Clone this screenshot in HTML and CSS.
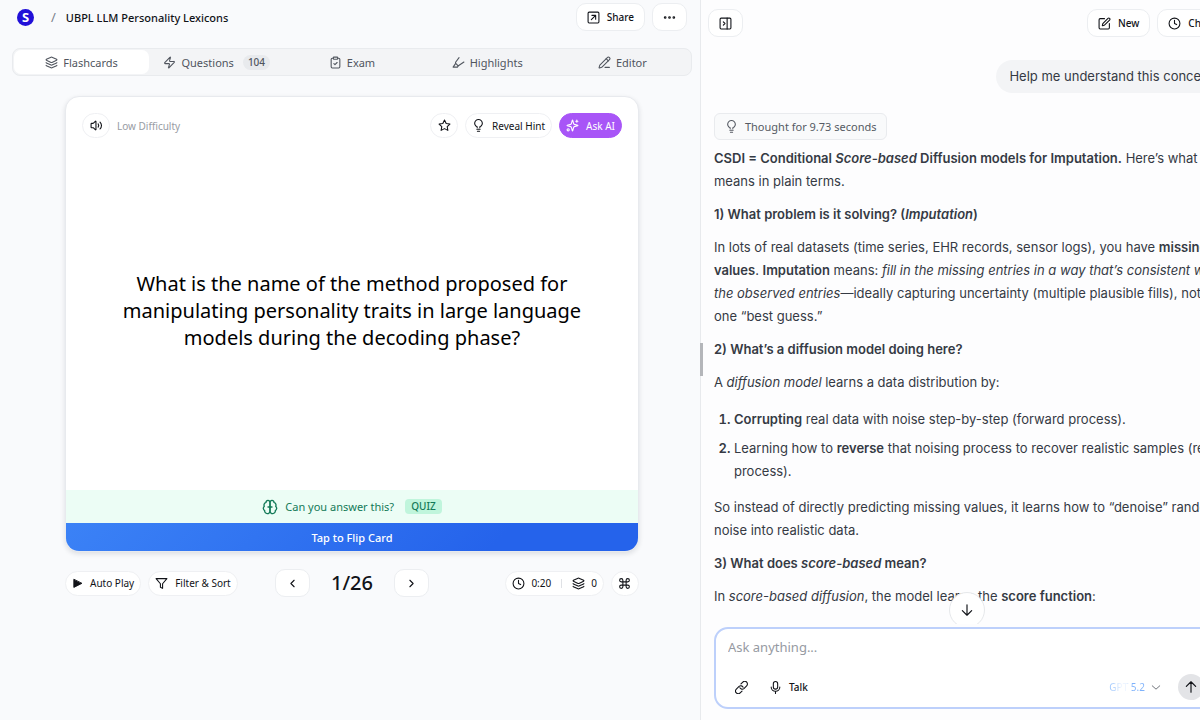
FILE: index.html
```html
<!DOCTYPE html>
<html lang="en">
  <head>
    <meta charset="UTF-8" />
    <meta name="viewport" content="width=device-width, initial-scale=1.0" />
    <title>UBPL LLM Personality Lexicons</title>
    <link rel="stylesheet" href="styles.css">
  </head>
  <body>
    <svg class="sprite" aria-hidden="true">
      <symbol id="layers" viewBox="0 0 24 24">
        <path d="M12.83 2.18a2 2 0 0 0-1.66 0L2.6 6.08a1 1 0 0 0 0 1.83l8.58 3.91a2 2 0 0 0 1.66 0l8.58-3.9a1 1 0 0 0 0-1.83z" />
        <path d="M2 12a1 1 0 0 0 .58.91l8.6 3.91a2 2 0 0 0 1.65 0l8.58-3.9A1 1 0 0 0 22 12" />
        <path d="M2 17a1 1 0 0 0 .58.91l8.6 3.91a2 2 0 0 0 1.65 0l8.58-3.9A1 1 0 0 0 22 17" />
      </symbol>
      <symbol id="zap" viewBox="0 0 24 24">
        <path d="M4 14a1 1 0 0 1-.78-1.63l9.9-10.2a.5.5 0 0 1 .86.46l-1.92 6.02A1 1 0 0 0 13 10h7a1 1 0 0 1 .78 1.63l-9.9 10.2a.5.5 0 0 1-.86-.46l1.92-6.02A1 1 0 0 0 11 14z" />
      </symbol>
      <symbol id="clipboard" viewBox="0 0 24 24">
        <rect x="8" y="2" width="8" height="4" rx="1" />
        <path d="M16 4h2a2 2 0 0 1 2 2v14a2 2 0 0 1-2 2H6a2 2 0 0 1-2-2V6a2 2 0 0 1 2-2h2M9 14l2 2 4-4" />
      </symbol>
      <symbol id="highlighter" viewBox="0 0 24 24">
        <path d="M13 3 7 11a2 2 0 0 0 0 2.500l3 3.500a2 2 0 0 0 2.500.5L22 11" />
        <path d="M6.500 14 2 20.500h8l2-3" />
      </symbol>
      <symbol id="pen-line" viewBox="0 0 24 24">
        <path d="M13 21h8M15 5l4 4" />
        <path d="M21.174 6.812a1 1 0 0 0-3.986-3.987L3.842 16.174a2 2 0 0 0-.5.83l-1.321 4.352a.5.5 0 0 0 .623.622l4.353-1.32a2 2 0 0 0 .83-.497z" />
      </symbol>
      <symbol id="volume" viewBox="0 0 24 24">
        <path d="M11 4.702a.705.705 0 0 0-1.203-.498L6.413 7.587A1.400 1.400 0 0 1 5.416 8H3a1 1 0 0 0-1 1v6a1 1 0 0 0 1 1h2.416a1.400 1.400 0 0 1 .997.413l3.383 3.384A.705.705 0 0 0 11 19.298z" />
        <path d="M15 9a5 5 0 0 1 0 6M18.500 5.600a9 9 0 0 1 0 12.800" />
      </symbol>
      <symbol id="star" viewBox="0 0 24 24">
        <path d="m12 2 3.090 6.260L22 9.270l-5 4.870 1.180 6.880L12 17.770l-6.180 3.250L7 14.140 2 9.270l6.910-1.010z" />
      </symbol>
      <symbol id="bulb" viewBox="0 0 24 24">
        <path d="M9.500 16v-1.500A7 7 0 1 1 14.500 14.500V16M9 19h6M10 22.500h4" />
      </symbol>
      <symbol id="sparkles" viewBox="0 0 24 24">
        <path d="M9.937 15.500A2 2 0 0 0 8.500 14.063l-6.135-1.582a.5.5 0 0 1 0-.962L8.500 9.936A2 2 0 0 0 9.937 8.500l1.582-6.135a.5.5 0 0 1 .963 0L14.063 8.500A2 2 0 0 0 15.500 9.937l6.135 1.581a.5.5 0 0 1 0 .964L15.500 14.063a2 2 0 0 0-1.437 1.437l-1.582 6.135a.5.5 0 0 1-.963 0z" />
        <path d="M20 2v4M22 4h-4" />
        <circle cx="4" cy="20" r="2" />
      </symbol>
      <symbol id="brain" viewBox="0 0 24 24">
        <path d="M12 5a3 3 0 1 0-5.997.125 4 4 0 0 0-2.526 5.770 4 4 0 0 0 .556 6.588A4 4 0 1 0 12 18Z" />
        <path d="M12 5a3 3 0 1 1 5.997.125 4 4 0 0 1 2.526 5.770 4 4 0 0 1-.556 6.588A4 4 0 1 1 12 18Z" />
        <path d="M9 12h6" />
      </symbol>
      <symbol id="play" viewBox="0 0 24 24">
        <path d="M4 3.500v17L21 12z" fill="currentColor" />
      </symbol>
      <symbol id="filter" viewBox="0 0 24 24">
        <path d="M22 3H2l8 9.460V19l4 2v-8.540z" />
      </symbol>
      <symbol id="left" viewBox="0 0 24 24"><path d="m15 18-6-6 6-6" /></symbol>
      <symbol id="right" viewBox="0 0 24 24"><path d="m9 18 6-6-6-6" /></symbol>
      <symbol id="down" viewBox="0 0 24 24"><path d="m3 8 9 8 9-8" /></symbol>
      <symbol id="clock" viewBox="0 0 24 24">
        <circle cx="12" cy="12" r="10" />
        <path d="M12 6v6l4 2" />
      </symbol>
      <symbol id="command" viewBox="0 0 24 24">
        <path d="M15 6v12a3 3 0 1 0 3-3H6a3 3 0 1 0 3 3V6a3 3 0 1 0-3 3h12a3 3 0 1 0-3-3" />
      </symbol>
      <symbol id="share" viewBox="0 0 24 24">
        <rect x="2" y="2" width="20" height="20" rx="2" />
        <path d="M9 8h7v7M16 8l-8 8" />
      </symbol>
      <symbol id="dots" viewBox="0 0 24 24">
        <circle cx="4" cy="12" r="1" />
        <circle cx="12" cy="12" r="1" />
        <circle cx="20" cy="12" r="1" />
      </symbol>
      <symbol id="panel" viewBox="0 0 24 24">
        <rect x="2" y="2" width="20" height="20" rx="2" />
        <path d="M15 2v20M8 9l3 3-3 3" />
      </symbol>
      <symbol id="compose" viewBox="0 0 24 24">
        <path d="M12 3H4a2 2 0 0 0-2 2v15a2 2 0 0 0 2 2h15a2 2 0 0 0 2-2v-8" />
        <path d="M18.375 2.625a1 1 0 0 1 3 3l-9.013 9.014a2 2 0 0 1-.853.505l-2.873.840a.5.5 0 0 1-.620-.620l.840-2.873a2 2 0 0 1 .506-.852z" />
      </symbol>
      <symbol id="arrow-down" viewBox="0 0 24 24"><path d="M12 3v18M4 13l8 8 8-8" /></symbol>
      <symbol id="arrow-up" viewBox="0 0 24 24"><path d="M12 21V3M4 11l8-8 8 8" /></symbol>
      <symbol id="link" viewBox="0 0 24 24">
        <path d="M9 12.500a5 5 0 0 0 7.500 1.500l5-5a4.800 4.800 0 0 0-7-7L11 5.500" />
        <path d="M15 11.500a5 5 0 0 0-7.500-1.500l-5 5a4.800 4.800 0 0 0 7 7L13 18.500" />
      </symbol>
      <symbol id="mic" viewBox="0 0 24 24">
        <rect x="8" y="1" width="8" height="14" rx="4" />
        <path d="M4 11a8 8 0 0 0 16 0M12 19v4" />
      </symbol>
    </svg>

    <div class="app">
      <main class="study">
        <header class="topbar">
          <a class="logo" href="#" aria-label="Home">S</a>
          <span class="slash">/</span>
          <h1>UBPL LLM Personality Lexicons</h1>
          <div class="topbar-actions">
            <button class="btn"><svg class="icon"><use href="#share" /></svg>Share</button>
            <button class="btn" aria-label="More"><svg class="icon dots"><use href="#dots" /></svg></button>
          </div>
        </header>

        <nav class="tabs">
          <button class="tab active"><svg class="icon"><use href="#layers" /></svg>Flashcards</button>
          <button class="tab"><svg class="icon"><use href="#zap" /></svg>Questions<span class="count">104</span></button>
          <button class="tab"><svg class="icon"><use href="#clipboard" /></svg>Exam</button>
          <button class="tab"><svg class="icon"><use href="#highlighter" /></svg>Highlights</button>
          <button class="tab"><svg class="icon"><use href="#pen-line" /></svg>Editor</button>
        </nav>

        <div class="deck">
          <section class="card">
            <div class="card-head">
              <button class="pill round" aria-label="Read aloud"><svg class="icon"><use href="#volume" /></svg></button>
              <span class="difficulty">Low Difficulty</span>
              <button class="pill round" aria-label="Star"><svg class="icon"><use href="#star" /></svg></button>
              <button class="pill"><svg class="icon"><use href="#bulb" /></svg>Reveal Hint</button>
              <button class="pill ask"><svg class="icon"><use href="#sparkles" /></svg>Ask AI</button>
            </div>
            <p class="question">What is the name of the method proposed for manipulating personality traits in large language models during the decoding phase?</p>
            <div class="quiz">
              <svg class="icon"><use href="#brain" /></svg>
              <span>Can you answer this?</span>
              <span class="quiz-tag">QUIZ</span>
            </div>
            <button class="flip">Tap to Flip Card</button>
          </section>

          <div class="controls">
            <div class="group">
              <button class="pill"><svg class="icon play"><use href="#play" /></svg>Auto Play</button>
              <button class="pill"><svg class="icon"><use href="#filter" /></svg>Filter &amp; Sort</button>
            </div>
            <div class="pager">
              <button class="btn" aria-label="Previous"><svg class="icon"><use href="#left" /></svg></button>
              <span class="page">1/26</span>
              <button class="btn" aria-label="Next"><svg class="icon"><use href="#right" /></svg></button>
            </div>
            <div class="group end">
              <div class="pill stats">
                <svg class="icon"><use href="#clock" /></svg><span>0:20</span>
                <span class="divider"></span>
                <svg class="icon"><use href="#layers" /></svg><span>0</span>
              </div>
              <button class="pill round" aria-label="Shortcuts"><svg class="icon"><use href="#command" /></svg></button>
            </div>
          </div>
        </div>
      </main>

      <aside class="chat">
        <div class="handle"></div>
        <header class="chat-head">
          <button class="btn" aria-label="Close panel"><svg class="icon"><use href="#panel" /></svg></button>
          <div class="chat-actions">
            <button class="btn"><svg class="icon"><use href="#compose" /></svg>New</button>
            <button class="btn"><svg class="icon"><use href="#clock" /></svg>Chats</button>
          </div>
        </header>

        <div class="thread">
          <p class="bubble">Help me understand this concept</p>
          <button class="thought"><svg class="icon"><use href="#bulb" /></svg>Thought for 9.73 seconds</button>
          <div class="answer">
            <p><strong>CSDI = Conditional <em>Score-based</em> Diffusion models for Imputation.</strong> Here’s what that means in plain terms.</p>
            <h2>1) What problem is it solving? (<em>Imputation</em>)</h2>
            <p>In lots of real datasets (time series, EHR records, sensor logs), you have <strong>missing values</strong>. <strong>Imputation</strong> means: <em>fill in the missing entries in a way that’s consistent with the observed entries</em>—ideally capturing uncertainty (multiple plausible fills), not just one “best guess.”</p>
            <h2>2) What’s a diffusion model doing here?</h2>
            <p>A <em>diffusion model</em> learns a data distribution by:</p>
            <ol>
              <li><strong>Corrupting</strong> real data with noise step-by-step (forward process).</li>
              <li>Learning how to <strong>reverse</strong> that noising process to recover realistic samples (reverse process).</li>
            </ol>
            <p>So instead of directly predicting missing values, it learns how to “denoise” random noise into realistic data.</p>
            <h2>3) What does <em>score-based</em> mean?</h2>
            <p>In <em>score-based diffusion</em>, the model learns the <strong>score function</strong>:</p>
          </div>
          <button class="scroll-down" aria-label="Scroll to bottom"><svg class="icon"><use href="#arrow-down" /></svg></button>
        </div>

        <form class="composer">
          <textarea rows="1" placeholder="Ask anything..." aria-label="Message"></textarea>
          <div class="composer-row">
            <button type="button" class="tool" aria-label="Attach link"><svg class="icon"><use href="#link" /></svg></button>
            <button type="button" class="tool"><svg class="icon"><use href="#mic" /></svg>Talk</button>
            <div class="model">
              <select aria-label="Model">
                <option>GPT 5.2</option>
              </select>
              <svg class="icon"><use href="#down" /></svg>
            </div>
            <button type="button" class="send" aria-label="Send"><svg class="icon"><use href="#arrow-up" /></svg></button>
          </div>
        </form>
      </aside>
    </div>
  </body>
</html>
```
FILE: styles.css
```css
* {
  box-sizing: border-box;
}
body {
  margin: 0;
  overflow: hidden;
  background: #f9fafc;
  color: #111318;
  font-family: 'Noto Sans', sans-serif;
  font-size: 11px;
}
h1,
h2,
p,
ol {
  margin: 0;
}
button,
select,
textarea {
  font: inherit;
  color: inherit;
}
button {
  display: flex;
  align-items: center;
  justify-content: center;
  padding: 0;
  border: 0;
  background: none;
  cursor: pointer;
}
.sprite {
  display: none;
}
.icon {
  flex: none;
  width: 13px;
  height: 13px;
  fill: none;
  stroke: currentColor;
  stroke-width: 2;
  stroke-linecap: round;
  stroke-linejoin: round;
}
.app {
  display: flex;
  height: 100vh;
}

/* Shared buttons */
.btn {
  gap: 7px;
  min-width: 35px;
  height: 28px;
  padding: 0 10px;
  border: 1px solid #eceef1;
  border-radius: 10px;
  background: #fff;
  font-size: 10px;
  font-weight: 500;
}
.pill {
  display: flex;
  align-items: center;
  justify-content: center;
  gap: 7px;
  height: 25px;
  padding: 0 6px;
  border: 1px solid #eff0f3;
  border-radius: 13px;
  background: #fff;
  font-size: 10px;
}
.pill.round {
  width: 28px;
  padding: 0;
}

/* Study pane */
.study {
  flex: 0 0 58.33%;
  min-width: 0;
  padding: 3px 8px 0 12px;
}
.topbar {
  display: flex;
  align-items: center;
  padding: 0 5px;
}
.logo {
  display: grid;
  place-items: center;
  width: 17px;
  height: 17px;
  border-radius: 50%;
  background: #2110d8;
  color: #fff;
  font-size: 13px;
  font-weight: 700;
  line-height: 17px;
  text-decoration: none;
}
.slash {
  margin: 0 10px 0 17px;
  color: #7b808a;
  font-size: 13px;
}
h1 {
  font-size: 11px;
  font-weight: 500;
}
.topbar-actions {
  display: flex;
  gap: 7px;
  margin-left: auto;
}
.topbar .dots {
  stroke-width: 3;
}
.tabs {
  display: grid;
  grid-template-columns: repeat(5, 1fr);
  height: 28px;
  margin-top: 17px;
  padding: 1px;
  border: 1px solid #e9ebee;
  border-radius: 8px;
  background: #f3f4f6;
}
.tab {
  gap: 5px;
  border-radius: 7px;
  color: #50555e;
}
.tab.active {
  background: #fff;
}
.count {
  margin-left: 4px;
  padding: 0 5px;
  border-radius: 8px;
  background: #e8eaed;
  font-size: 10px;
  font-weight: 500;
  line-height: 15px;
}

/* Flashcard */
.deck {
  padding: 20px 53px 0;
}
.card {
  display: flex;
  flex-direction: column;
  height: calc(100vh - 264px);
  overflow: hidden;
  border: 1px solid #e8eaee;
  border-radius: 14px;
  background: #fff;
  box-shadow: 0 2px 5px rgba(20, 25, 40, 0.12);
}
.card-head {
  display: flex;
  align-items: center;
  gap: 7px;
  padding: 16px 16px 0;
}
.difficulty {
  margin-right: auto;
  color: #989ca4;
  font-size: 10px;
}
.pill.ask {
  border-color: #a855f7;
  background: #a855f7;
  color: #fff;
}
.question {
  flex: 1;
  display: flex;
  align-items: center;
  padding: 0 50px 8px;
  color: #000;
  font-size: 20px;
  line-height: 27px;
  text-align: center;
}
.quiz {
  display: flex;
  align-items: center;
  justify-content: center;
  gap: 7px;
  height: 33px;
  background: #ecfdf5;
  color: #137a58;
}
.quiz .icon {
  width: 16px;
  height: 16px;
}
.quiz-tag {
  margin-left: 4px;
  padding: 0 6px;
  border-radius: 4px;
  background: #c0f5dc;
  font-size: 10px;
  font-weight: 500;
  line-height: 15px;
}
.flip {
  height: 28px;
  background: linear-gradient(135deg, #3b82f6, #2563eb 75%);
  color: #fff;
  font-weight: 500;
}

/* Controls */
.controls {
  display: grid;
  grid-template-columns: 1fr auto 1fr;
  align-items: center;
  padding-top: 17px;
}
.group {
  display: flex;
  gap: 7px;
}
.end {
  justify-content: flex-end;
}
.play {
  width: 11px;
}
.pager {
  display: flex;
  align-items: center;
  gap: 21px;
}
.page {
  font-size: 20px;
  font-weight: 500;
  line-height: 28px;
}
.stats {
  gap: 6px;
}
.divider {
  width: 1px;
  height: 9px;
  margin: 0 4px;
  background: #dfe1e5;
}

/* Chat pane */
.chat {
  position: relative;
  flex: 0 0 44.2%;
  display: flex;
  flex-direction: column;
  border-left: 1px solid #e8eaed;
  background: #fdfdfe;
}
.handle {
  position: absolute;
  top: calc(50% - 17px);
  left: -1px;
  width: 3px;
  height: 33px;
  background: #b4b6ba;
}
.chat-head {
  display: flex;
  justify-content: space-between;
  padding: 9px 4px 0 7px;
}
.chat-actions {
  display: flex;
  gap: 7px;
}
.thread {
  position: relative;
  flex: 1;
  display: flex;
  flex-direction: column;
  align-items: flex-start;
  min-height: 0;
  margin-top: 23px;
  padding-left: 13px;
  overflow: hidden;
  color: #353a44;
}
.bubble {
  align-self: flex-end;
  margin-right: 4px;
  padding: 5px 13px;
  border-radius: 17px;
  background: #f3f4f6;
  font-family: Inter, sans-serif;
  font-size: 13px;
  line-height: 23px;
}
.thought {
  gap: 7px;
  height: 27px;
  margin: 20px 0 7px;
  padding: 0 10px;
  border: 1px solid #e9ebee;
  border-radius: 6px;
  background: #f9fafb;
  color: #555a63;
}
.answer {
  display: flex;
  flex-direction: column;
  align-self: stretch;
  gap: 10px;
  margin-right: -12px;
  font-family: Inter, sans-serif;
  font-size: 13px;
  line-height: 23px;
}
.answer h2 {
  font-size: 13px;
  font-weight: 600;
}
.answer strong {
  font-weight: 600;
}
ol {
  display: flex;
  flex-direction: column;
  gap: 6px;
  padding: 4px 0 3px 20px;
}
li::marker {
  font-weight: 600;
}
.scroll-down {
  position: absolute;
  bottom: -4px;
  left: calc(50% - 17px);
  width: 36px;
  height: 36px;
  border: 1px solid #e6e8eb;
  border-radius: 50%;
  background: #fff;
  color: #111318;
}

/* Composer */
.composer {
  display: flex;
  flex-direction: column;
  height: 82px;
  margin: 3px 12px 11px 13px;
  padding: 8px 12px 7px;
  border: 2px solid #bdd0fb;
  border-radius: 14px;
  background: #fff;
}
.composer textarea {
  padding: 0;
  border: 0;
  outline: none;
  background: none;
  font-size: 13px;
  line-height: 20px;
  resize: none;
}
.composer textarea::placeholder {
  color: #969aa2;
}
.composer-row {
  display: flex;
  align-items: center;
  margin-top: auto;
}
.tool {
  gap: 7px;
  padding: 0 7px;
  font-size: 10px;
  font-weight: 500;
}
.tool + .tool {
  margin-left: 7px;
}
.model {
  display: flex;
  align-items: center;
  gap: 6px;
  margin-left: auto;
}
.model select {
  padding: 0;
  border: 0;
  appearance: none;
  background: linear-gradient(90deg, #93c0fd, #eef5ff 35%, #eef5ff 50%, #7eb2fb 65%);
  -webkit-background-clip: text;
  background-clip: text;
  color: transparent;
  font-size: 10px;
}
.model .icon {
  width: 10px;
  color: #555a63;
}
.send {
  width: 26px;
  height: 26px;
  margin-left: 17px;
  border-radius: 50%;
  background: #e3e4e7;
}
.scroll-down .icon,
.send .icon {
  width: 14px;
  height: 14px;
}
```
